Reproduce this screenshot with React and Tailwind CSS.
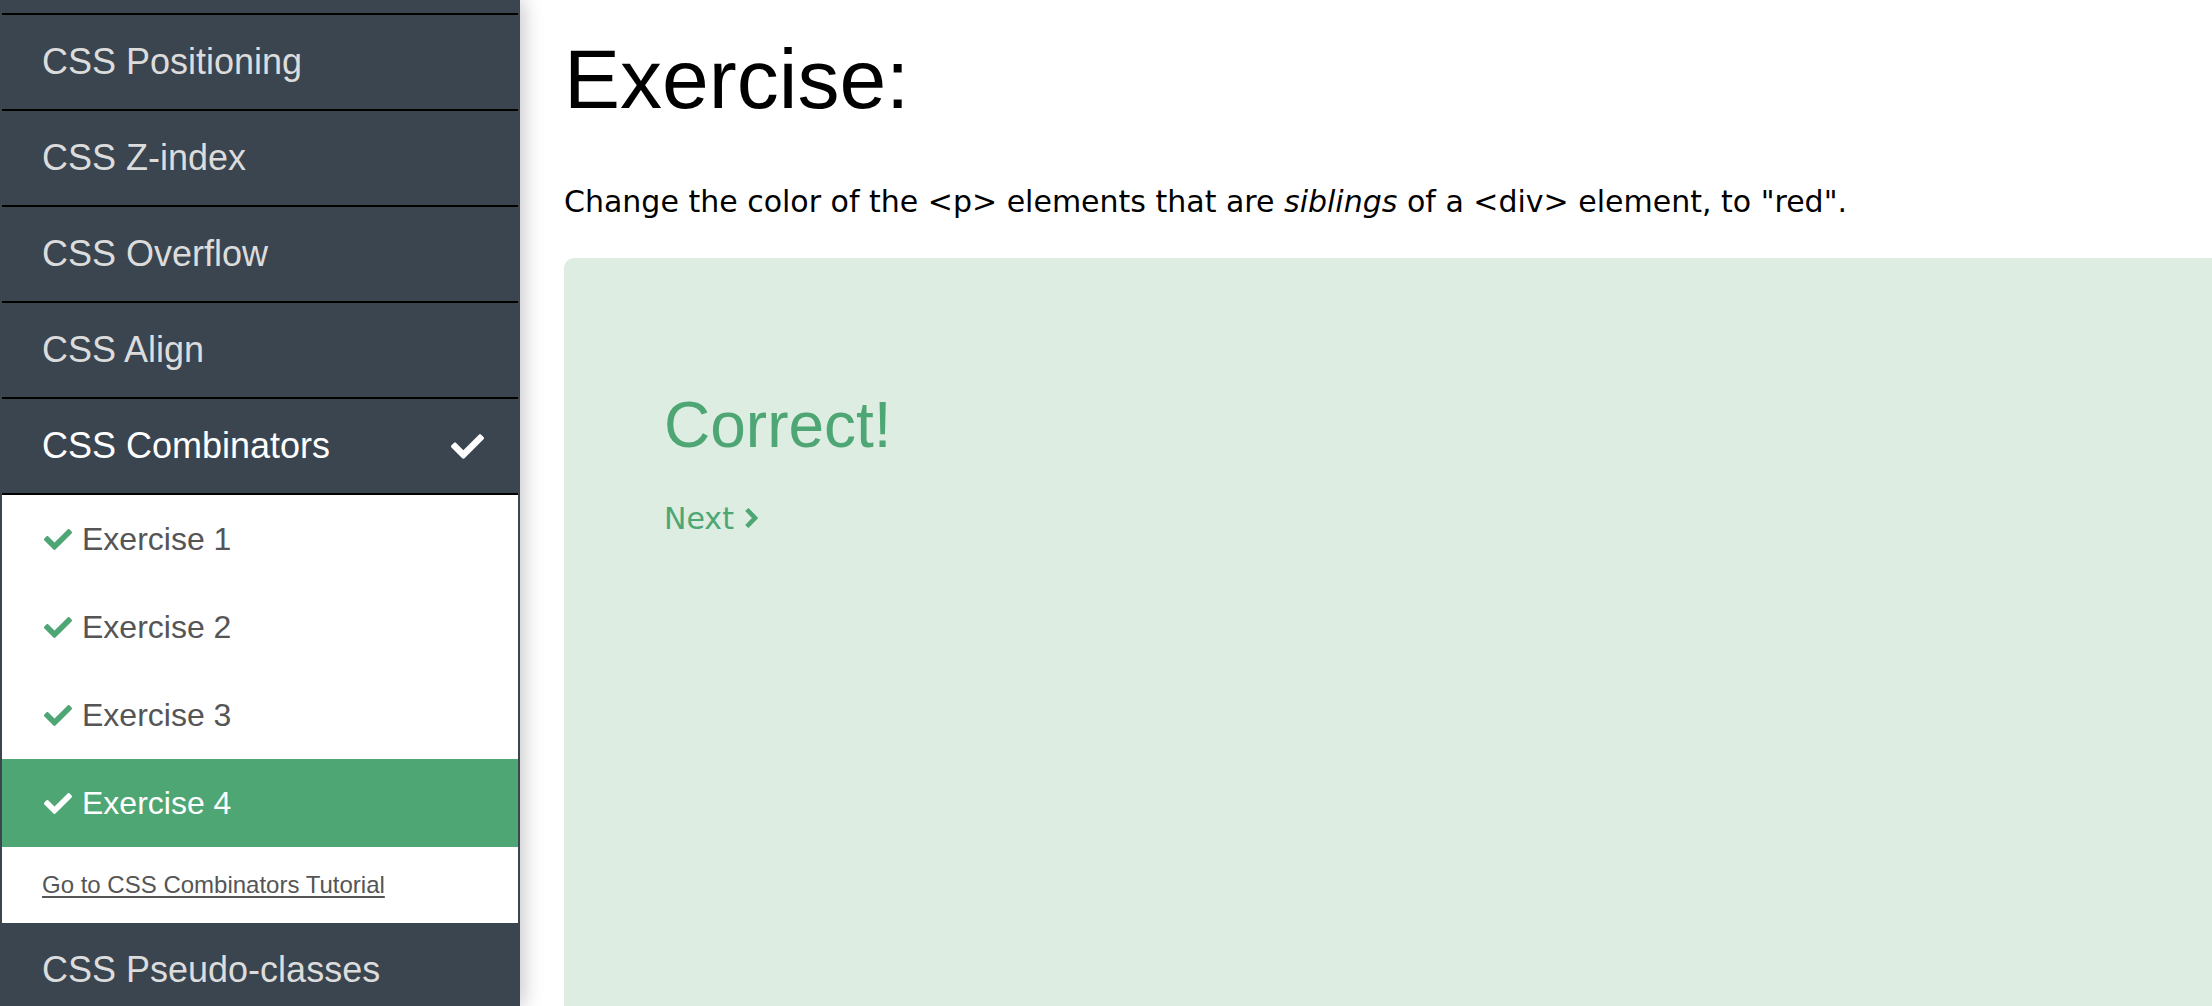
import React from 'react';

const topics = ['CSS Positioning', 'CSS Z-index', 'CSS Overflow', 'CSS Align'];
const exercises = [
  { name: 'Exercise 1', active: false },
  { name: 'Exercise 2', active: false },
  { name: 'Exercise 3', active: false },
  { name: 'Exercise 4', active: true },
];

// Icono check (estilo Font Awesome)
function Check({ className }) {
  return (
    <svg viewBox="0 64 512 384" className={className} fill="currentColor">
      <path d="M173.898 439.404l-166.4-166.4c-9.997-9.997-9.997-26.206 0-36.204l36.203-36.204c9.997-9.998 26.207-9.998 36.204 0L192 312.69 432.095 72.596c9.997-9.997 26.207-9.997 36.204 0l36.203 36.204c9.997 9.997 9.997 26.206 0 36.204l-294.4 294.401c-9.998 9.997-26.207 9.997-36.204-.001z" />
    </svg>
  );
}

function Chevron({ className }) {
  return (
    <svg viewBox="0 0 10 16" className={className} fill="none" stroke="currentColor" strokeWidth="3.6" strokeLinecap="square">
      <path d="M2.5 2.5 L7.8 8 L2.5 13.5" />
    </svg>
  );
}

export default function App() {
  return (
    <div className="flex h-[1006px] w-full overflow-hidden bg-white font-['Liberation_Sans',Arial,sans-serif]">
      {/* Barra lateral */}
      <aside className="relative z-10 w-[520px] shrink-0 bg-[#3a4550] px-[2px] shadow-[4px_0_18px_rgba(0,0,0,0.22)]">
        <div className="h-[13px]" />
        {topics.map((t) => (
          <div
            key={t}
            className="flex h-[96px] items-center border-t-2 border-black pl-[40px] text-[36px] text-[#dcdcdc]"
          >
            {t}
          </div>
        ))}
        <div className="flex h-[96px] items-center justify-between border-t-2 border-black pl-[40px] pr-[34px] text-[36px] text-white">
          <span>CSS Combinators</span>
          <Check className="h-[25px] w-[33px] text-white" />
        </div>
        <div className="border-t-2 border-black bg-white">
          {exercises.map((ex) => (
            <div
              key={ex.name}
              className={
                ex.active
                  ? 'flex h-[88px] items-center gap-[10px] bg-[#4ea674] pl-[42px] text-[32px] text-white'
                  : 'flex h-[88px] items-center gap-[10px] pl-[42px] text-[32px] text-[#555555]'
              }
            >
              <Check className={ex.active ? 'h-[21px] w-[28px] text-white' : 'h-[21px] w-[28px] text-[#4ea674]'} />
              <span>{ex.name}</span>
            </div>
          ))}
          <div className="flex h-[76px] items-center pl-[40px]">
            <a href="#" className="text-[24px] text-[#555555] underline underline-offset-[3px]">
              Go to CSS Combinators Tutorial
            </a>
          </div>
        </div>
        <div className="flex h-[94px] items-center pl-[40px] text-[36px] text-[#dcdcdc]">CSS Pseudo-classes</div>
      </aside>

      {/* Contenido principal */}
      <main className="flex min-w-0 flex-1 flex-col pl-[44px]">
        <h2 className="pt-[37px] font-['Liberation_Sans_Narrow','Liberation_Sans',Arial,sans-serif] text-[84px] leading-none text-black">
          Exercise:
        </h2>
        <p className="mt-[66px] font-['DejaVu_Sans',Verdana,sans-serif] text-[30px] leading-none text-black">
          Change the color of the &lt;p&gt; elements that are <i>siblings</i> of a &lt;div&gt; element, to "red".
        </p>
        <div className="mt-[41px] flex-1 rounded-tl-[10px] bg-[#ddede2] pl-[100px] pt-[131px]">
          <h3 className="text-[64px] leading-[1.15] text-[#4ea674]">Correct!</h3>
          <a href="#" className="mt-[33px] flex items-center gap-[11px] font-['DejaVu_Sans',Verdana,sans-serif] text-[30px] text-[#4ea674]">
            Next
            <Chevron className="h-[20px] w-[13px]" />
          </a>
        </div>
      </main>
    </div>
  );
}
